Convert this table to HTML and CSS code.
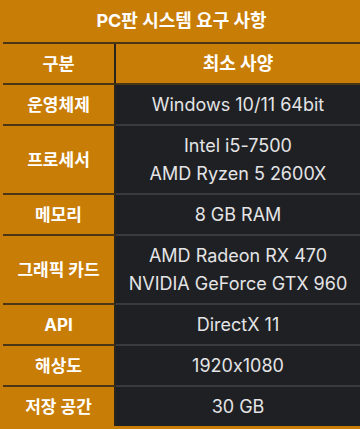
FILE: index.html
```html
<!DOCTYPE html>
<html lang="ko">
<head>
<meta charset="utf-8">
<title>PC판 시스템 요구 사항</title>
<link rel="stylesheet" href="styles.css">
</head>
<body>
<table class="spec">
  <colgroup>
    <col class="col-label">
    <col class="col-value">
  </colgroup>
  <tr>
    <th class="title" colspan="2">PC판 시스템 요구 사항</th>
  </tr>
  <tr>
    <th class="label head-label">구분</th>
    <th class="head">최소 사양</th>
  </tr>
  <tr>
    <th class="label">운영체제</th>
    <td class="value">Windows 10/11 64bit</td>
  </tr>
  <tr>
    <th class="label">프로세서</th>
    <td class="value">Intel i5-7500<br>AMD Ryzen 5 2600X</td>
  </tr>
  <tr>
    <th class="label">메모리</th>
    <td class="value">8 GB RAM</td>
  </tr>
  <tr>
    <th class="label">그래픽 카드</th>
    <td class="value">AMD Radeon RX 470<br>NVIDIA GeForce GTX 960</td>
  </tr>
  <tr>
    <th class="label">API</th>
    <td class="value">DirectX 11</td>
  </tr>
  <tr>
    <th class="label">해상도</th>
    <td class="value">1920x1080</td>
  </tr>
  <tr>
    <th class="label last">저장 공간</th>
    <td class="value last">30 GB</td>
  </tr>
</table>
</body>
</html>
```

FILE: styles.css
```css
html, body {
  margin: 0;
  padding: 0;
  background: #1a1815;
}

body {
  width: 360px;
  overflow: hidden;
  font-family: Inter, "Noto Sans CJK KR", "Noto Sans", sans-serif;
  font-feature-settings: "calt" 0;
}

.spec {
  width: 360px;
  border-collapse: separate;
  border-spacing: 0;
  border-left: 3px solid #c87d06;
  border-bottom: 3px solid #c87d06;
  background: #1f2023;
  table-layout: fixed;
}

.col-label {
  width: 113px;
}

.spec th,
.spec td {
  padding: 5.5px 4px 5.5px;
  line-height: 28px;
  font-size: 18px;
  text-align: center;
  vertical-align: middle;
  white-space: nowrap;
}

.spec .title {
  background: #c87d06;
  color: #ffffff;
  font-weight: 700;
  padding-top: 7px;
  padding-bottom: 7px;
  border-bottom: 2px solid #4a3614;
}

.spec .label {
  background: #c87d06;
  color: #ffffff;
  font-size: 17px;
  font-weight: 700;
  border-right: 2px solid #2b241b;
  border-bottom: 2px solid #4a3614;
}

.spec .head-label {
  font-size: 17.5px;
}

.head {
  background: #c87d06;
  color: #ffffff;
  font-weight: 700;
  border-bottom: 2px solid #4a3614;
}

.value {
  color: #e4e4e6;
  font-weight: 400;
  border-bottom: 2px solid #3a3b3e;
}

.spec .last {
  border-bottom: 0;
}
```
